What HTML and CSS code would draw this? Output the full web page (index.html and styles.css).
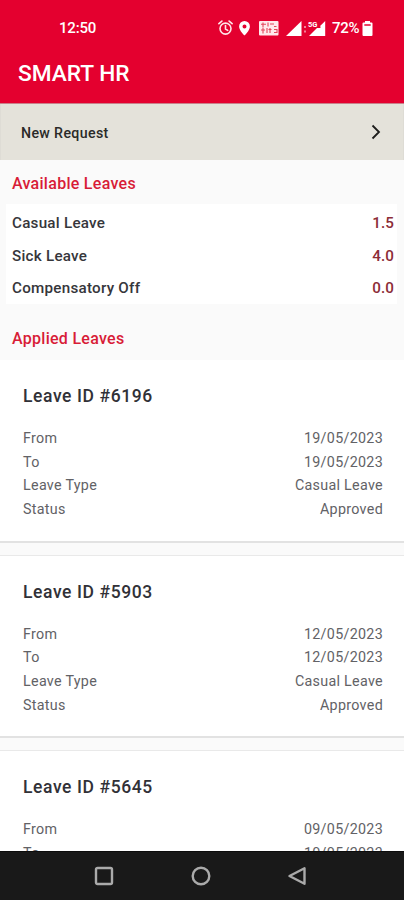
FILE: index.html
```
<!DOCTYPE html>
<html lang="en">
<head>
<meta charset="utf-8">
<title>Smart HR</title>
<link rel="stylesheet" href="styles.css">
</head>
<body>
<div class="phone">
  <header class="header">
    <div class="status">
      <span class="clock">12:50</span>
      <svg class="status-icons" width="108" height="18" viewBox="0 0 108 18" fill="#fff">
        <g fill="none" stroke="#ffe4e8" stroke-width="1.6" stroke-linecap="round">
          <circle cx="7.500" cy="9.600" r="5.500"/>
          <path d="M7.500 6.500v3.500l2.200 1.400M.9 4.700l3-2.600M14.100 4.700l-3-2.600"/>
        </g>
        <path fill-rule="evenodd" d="M26.500 2a5.400 5.400 0 0 0-5.400 5.400c0 4 5.400 9.100 5.400 9.100s5.400-5.100 5.400-9.100A5.400 5.400 0 0 0 26.500 2zm0 3.500a2 2 0 1 1 0 4 2 2 0 0 1 0-4z"/>
        <rect x="41" y="2" width="19.500" height="14.500" rx="1" fill="#ffe9ec"/>
        <path d="M43 5.200h5M45 3.500v5M50 3.500v4M52 5h4M43 11h4M45 9v5.500M49 9v5M50.500 10.500h3M52 9v5M56 7.500h2.500M56 10.500h3v3h-3" fill="none" stroke="#e4465c" stroke-width="1.100"/>
        <path d="M68 17L83.500 2v15z"/>
        <path d="M86 7h2v2h-2zM86 11.500h2v2h-2z" opacity=".5"/>
        <path d="M91 17l8-8h3.500l-.2-2.200L107.200 2v15z"/>
        <text class="network" x="90" y="7.500">5G</text>
      </svg>
      <span class="percent">72%</span>
      <svg class="battery" width="11" height="17" viewBox="0 0 11 17">
        <path fill="#fff" fill-rule="evenodd" d="M3 1h5v1.500h1.500q1 0 1 1V15q0 1-1 1h-8q-1 0-1-1V3.500q0-1 1-1H3zM2.300 4.300v1.500h6.400V4.300z"/>
      </svg>
    </div>
    <h1 class="app-title">SMART HR</h1>
  </header>

  <a class="request">
    <span>New Request</span>
    <svg width="10" height="16" viewBox="0 0 10 16" fill="none" stroke="#1d1d1b" stroke-width="1.800"><path d="M1.500 1.500L8 8l-6.500 6.500"/></svg>
  </a>

  <h2 class="section available">Available Leaves</h2>
  <div class="balances">
    <div class="balance"><span>Casual Leave</span><b>1.5</b></div>
    <div class="balance"><span>Sick Leave</span><b>4.0</b></div>
    <div class="balance"><span>Compensatory Off</span><b>0.0</b></div>
  </div>
  <h2 class="section applied">Applied Leaves</h2>

  <main class="list">
    <article class="card">
      <h3>Leave ID #6196</h3>
      <div class="row"><span>From</span><span>19/05/2023</span></div>
      <div class="row"><span>To</span><span>19/05/2023</span></div>
      <div class="row"><span>Leave Type</span><span>Casual Leave</span></div>
      <div class="row"><span>Status</span><span>Approved</span></div>
    </article>
    <article class="card">
      <h3>Leave ID #5903</h3>
      <div class="row"><span>From</span><span>12/05/2023</span></div>
      <div class="row"><span>To</span><span>12/05/2023</span></div>
      <div class="row"><span>Leave Type</span><span>Casual Leave</span></div>
      <div class="row"><span>Status</span><span>Approved</span></div>
    </article>
    <article class="card">
      <h3>Leave ID #5645</h3>
      <div class="row"><span>From</span><span>09/05/2023</span></div>
      <div class="row"><span>To</span><span>10/05/2023</span></div>
    </article>
  </main>

  <nav class="navbar">
    <svg width="20" height="20" viewBox="0 0 20 20"><rect x="2" y="2" width="16" height="16" rx="1.500"/></svg>
    <svg width="20" height="20" viewBox="0 0 20 20"><circle cx="10" cy="10" r="8.300"/></svg>
    <svg width="20" height="20" viewBox="0 0 20 20"><path d="M17.500 2.200v15.600L2.500 10z"/></svg>
  </nav>
</div>
</body>
</html>
```
FILE: styles.css
```
* { box-sizing: border-box; }
body { margin: 0; font-family: Roboto, "Liberation Sans", sans-serif; }
h1, h2, h3 { margin: 0; font-weight: 500; }
svg { display: block; flex: none; }

.phone {
  width: 404px;
  height: 900px;
  overflow: hidden;
  display: flex;
  flex-direction: column;
  background: #fafafa;
}

.header {
  flex: none;
  height: 104px;
  background: #e4002f;
  border-bottom: 1px solid #c9808a;
  color: #fff;
}
.status {
  display: flex;
  align-items: center;
  height: 37px;
  padding: 19px 0 0 59px;
  font-size: 15px;
  font-weight: 500;
}
.clock { width: 159px; letter-spacing: -.2px; }
.status-icons { margin-right: 6px; }
.network { font-size: 7.500px; font-weight: 700; }
.percent { width: 29px; letter-spacing: -.3px; }
.battery { margin-left: 1px; }
.app-title {
  padding: 23px 0 0 18px;
  font-size: 22.700px;
  line-height: 28px;
}

.request {
  flex: none;
  height: 56px;
  padding: 1px 22px 0 20px;
  display: flex;
  align-items: center;
  justify-content: space-between;
  background: #e4e2da;
  border: solid #dedcd5;
  border-width: 0 1px;
  color: #2a2a28;
  font-size: 14.200px;
  font-weight: 500;
  letter-spacing: .35px;
}
.request svg { margin-top: -2px; }

.section {
  flex: none;
  padding-left: 12px;
  color: #d81c37;
  font-size: 16px;
  letter-spacing: .28px;
}
.available { height: 44px; line-height: 47px; }
.applied { height: 56px; line-height: 69px; }

.balances {
  flex: none;
  height: 100px;
  margin: 0 7px 0 6px;
  padding: 2px 3px 0 6px;
  background: #fff;
}
.balance {
  display: flex;
  justify-content: space-between;
  height: 32.500px;
  line-height: 34px;
  color: #36363b;
  font-size: 15.200px;
  font-weight: 500;
  letter-spacing: .25px;
}
.balance b { color: #8c2c37; font-weight: 500; letter-spacing: .1px; }

.list { flex: 1; min-height: 0; overflow: hidden; }
.card {
  height: 182.700px;
  margin-bottom: 13px;
  padding: 22px 21px 0 23px;
  background: #fff;
  border-bottom: 2px solid #e2e2e2;
}
.card + .card { box-shadow: 0 -1px 0 #e9e9e9; }
.card h3 {
  height: 44px;
  color: #313137;
  font-size: 17.500px;
  line-height: 29px;
  letter-spacing: .6px;
}
.row {
  display: flex;
  justify-content: space-between;
  height: 23.700px;
  line-height: 25px;
  color: #626266;
  font-size: 14.300px;
  letter-spacing: .3px;
}

.navbar {
  flex: none;
  height: 49px;
  padding: 0 97px 0 94px;
  display: flex;
  align-items: center;
  justify-content: space-between;
  background: #191919;
  border-top: 1px solid #0c0c0c;
}
.navbar svg { fill: none; stroke: #aaa; stroke-width: 2.400; stroke-linejoin: round; }
```
